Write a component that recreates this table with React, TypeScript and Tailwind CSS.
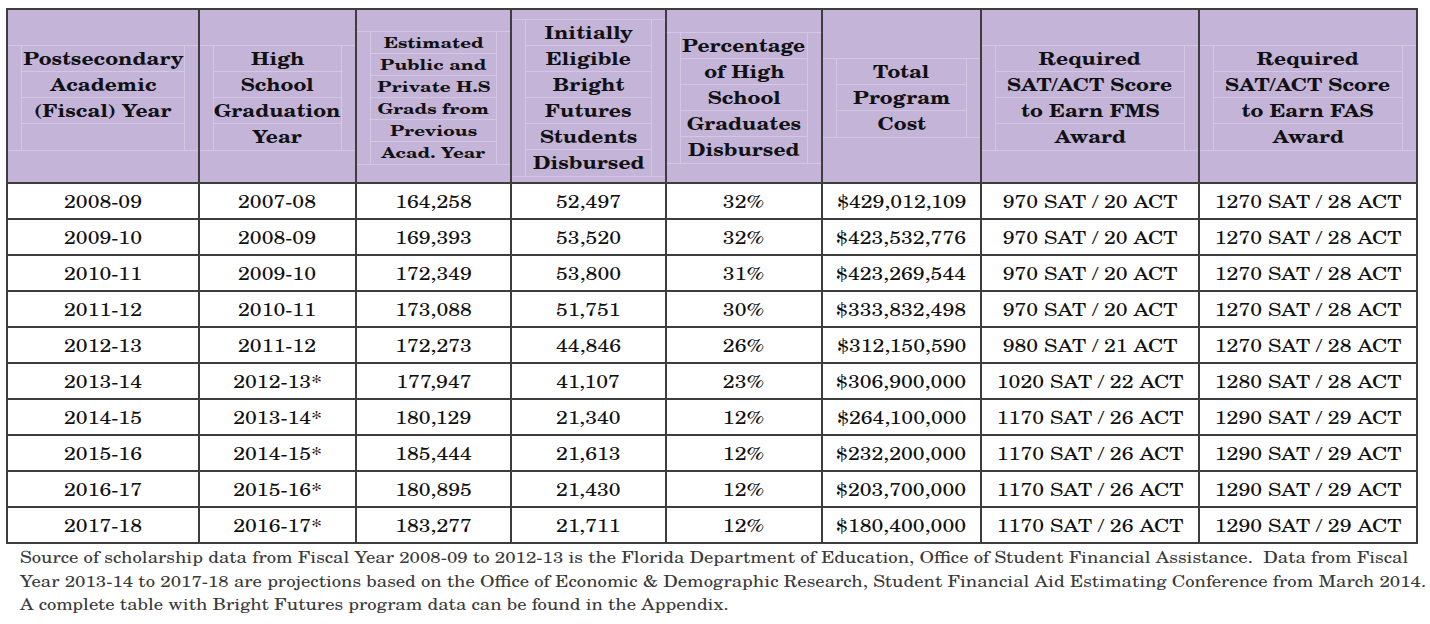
import React from "react";

const headers: string[][] = [
  ["Postsecondary", "Academic", "(Fiscal) Year", ""],
  ["High", "School", "Graduation", "Year"],
  ["Estimated", "Public and", "Private H.S", "Grads from", "Previous", "Acad. Year"],
  ["Initially", "Eligible", "Bright", "Futures", "Students", "Disbursed"],
  ["Percentage", "of High", "School", "Graduates", "Disbursed"],
  ["Total", "Program", "Cost"],
  ["Required", "SAT/ACT Score", "to Earn FMS", "Award"],
  ["Required", "SAT/ACT Score", "to Earn FAS", "Award"],
];

const rows: string[][] = [
  ["2008-09", "2007-08", "164,258", "52,497", "32%", "$429,012,109", "970 SAT / 20 ACT", "1270 SAT / 28 ACT"],
  ["2009-10", "2008-09", "169,393", "53,520", "32%", "$423,532,776", "970 SAT / 20 ACT", "1270 SAT / 28 ACT"],
  ["2010-11", "2009-10", "172,349", "53,800", "31%", "$423,269,544", "970 SAT / 20 ACT", "1270 SAT / 28 ACT"],
  ["2011-12", "2010-11", "173,088", "51,751", "30%", "$333,832,498", "970 SAT / 20 ACT", "1270 SAT / 28 ACT"],
  ["2012-13", "2011-12", "172,273", "44,846", "26%", "$312,150,590", "980 SAT / 21 ACT", "1270 SAT / 28 ACT"],
  ["2013-14", "2012-13*", "177,947", "41,107", "23%", "$306,900,000", "1020 SAT / 22 ACT", "1280 SAT / 28 ACT"],
  ["2014-15", "2013-14*", "180,129", "21,340", "12%", "$264,100,000", "1170 SAT / 26 ACT", "1290 SAT / 29 ACT"],
  ["2015-16", "2014-15*", "185,444", "21,613", "12%", "$232,200,000", "1170 SAT / 26 ACT", "1290 SAT / 29 ACT"],
  ["2016-17", "2015-16*", "180,895", "21,430", "12%", "$203,700,000", "1170 SAT / 26 ACT", "1290 SAT / 29 ACT"],
  ["2017-18", "2016-17*", "183,277", "21,711", "12%", "$180,400,000", "1170 SAT / 26 ACT", "1290 SAT / 29 ACT"],
];

const colClasses = [
  "w-[192px]",
  "w-[157px]",
  "w-[155px]",
  "w-[155px]",
  "w-[156px]",
  "w-[159px]",
  "w-[218px]",
  "w-[218px]",
];

export default function App() {
  return (
    <div className="bg-white w-[1430px] h-[624px] overflow-hidden pt-[8px] font-['TeX_Gyre_Schola','DejaVu_Serif',serif]">
      <table className="ml-[6px] border-collapse table-fixed border-2 border-[#3d3d3d]">
        <colgroup>
          {colClasses.map((c, i) => (
            <col key={i} className={c} />
          ))}
        </colgroup>
        <thead>
          <tr className="h-[174px]">
            {headers.map((lines, i) => {
              const small = i === 2;
              return (
                <th
                  key={i}
                  className="bg-[#c3b4d8] border-2 border-[#3d3d3d] p-0 pt-[3px] align-middle text-[#111] font-bold"
                >
                  <div className="border-y border-[#d3c8e3]">
                    <div className="mx-[13px] border-x border-[#d3c8e3]">
                      {lines.map((l, j) => (
                        <div
                          key={j}
                          className={
                            (small
                              ? "text-[15px] leading-[21px] h-[22px] "
                              : "text-[18px] leading-[25px] h-[26px] ") +
                            "whitespace-nowrap " +
                            (j < lines.length - 1 ? "border-b border-[#d3c8e3]" : "")
                          }
                        >
                          <span
                            className={
                              "inline-block " + (small ? "scale-x-[1.26]" : "scale-x-[1.17]")
                            }
                          >
                            {l}
                          </span>
                        </div>
                      ))}
                    </div>
                  </div>
                </th>
              );
            })}
          </tr>
        </thead>
        <tbody>
          {rows.map((r, i) => (
            <tr key={i} className="h-[36px]">
              {r.map((c, j) => (
                <td
                  key={j}
                  className="border-2 border-[#3d3d3d] p-0 text-center align-middle text-[18px] leading-[22px] text-[#111] whitespace-nowrap"
                >
                  <span className="inline-block scale-x-[1.18]">{c}</span>
                </td>
              ))}
            </tr>
          ))}
        </tbody>
      </table>
      <div className="pl-[20px] pt-[1px] text-[16px] leading-[23.5px] text-[#3a3a3a] whitespace-pre">
        <div className="origin-left scale-x-[1.167]">
          Source of scholarship data from Fiscal Year 2008-09 to 2012-13 is the Florida Department of Education, Office of Student Financial Assistance.  Data from Fiscal
        </div>
        <div className="origin-left scale-x-[1.167]">
          Year 2013-14 to 2017-18 are projections based on the Office of Economic &amp; Demographic Research, Student Financial Aid Estimating Conference from March 2014.
        </div>
        <div className="origin-left scale-x-[1.167]">
          A complete table with Bright Futures program data can be found in the Appendix.
        </div>
      </div>
    </div>
  );
}
